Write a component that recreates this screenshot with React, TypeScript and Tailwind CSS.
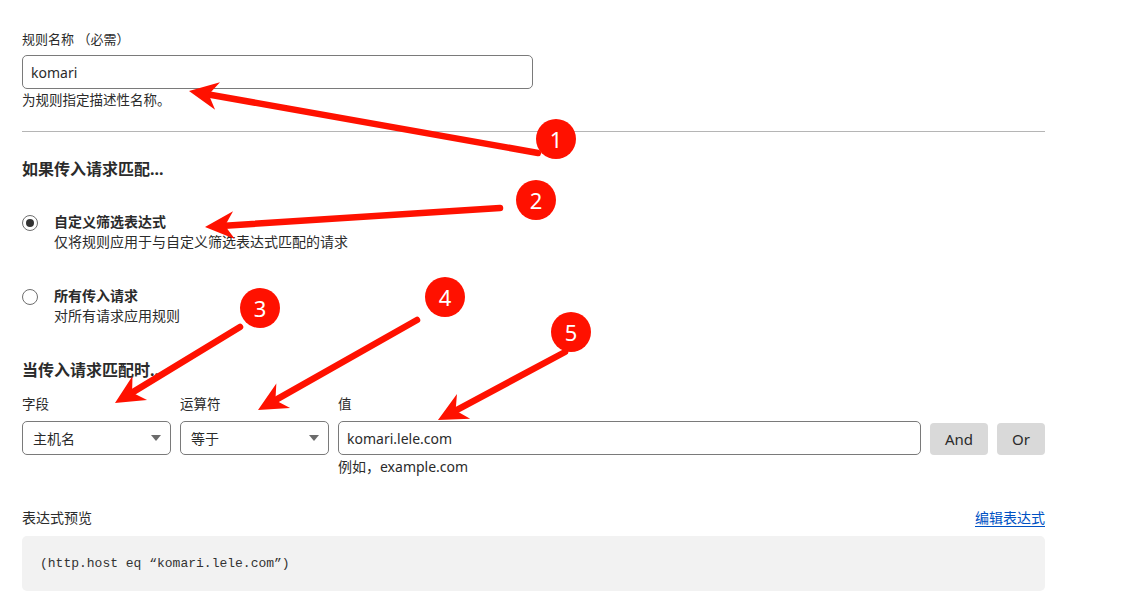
import React from "react";

const RED = "#ff1100";

type Pt = { x1: number; y1: number; x2: number; y2: number };

// annotation arrows: tail (x1,y1) -> tip (x2,y2)
const arrows: Pt[] = [
  { x1: 538, y1: 153, x2: 189, y2: 91 },
  { x1: 500, y1: 208, x2: 205, y2: 227 },
  { x1: 240, y1: 327, x2: 115, y2: 403 },
  { x1: 417, y1: 320, x2: 258, y2: 410 },
  { x1: 565, y1: 352, x2: 438, y2: 420 },
];

const badges = [
  { n: 1, x: 556, y: 139 },
  { n: 2, x: 536, y: 200 },
  { n: 3, x: 260, y: 308 },
  { n: 4, x: 445, y: 297 },
  { n: 5, x: 571, y: 332 },
];

function Arrow({ x1, y1, x2, y2 }: Pt) {
  const dx = x2 - x1;
  const dy = y2 - y1;
  const len = Math.hypot(dx, dy);
  const ux = dx / len;
  const uy = dy / len;
  const px = -uy;
  const py = ux;
  const L = 29;
  const W = 14;
  const N = 20;
  const bx = x2 - ux * L;
  const by = y2 - uy * L;
  const nx = x2 - ux * N;
  const ny = y2 - uy * N;
  const points = `${x2},${y2} ${bx + px * W},${by + py * W} ${nx},${ny} ${bx - px * W},${by - py * W}`;
  return (
    <g>
      <line x1={x1} y1={y1} x2={nx} y2={ny} stroke={RED} strokeWidth={6.5} strokeLinecap="round" />
      <polygon points={points} fill={RED} />
    </g>
  );
}

function Caret() {
  return (
    <svg width="10" height="6" viewBox="0 0 10 6">
      <path d="M0 0 L10 0 L5 6 Z" fill="#6b6b6b" />
    </svg>
  );
}

function Select({ value }: { value: string }) {
  return (
    <div className="mt-[8px] w-[149px] h-[34px] border border-[#7a7a7a] rounded-[5px] pl-[10px] pr-[9px] flex items-center justify-between text-[14px]">
      <span>{value}</span>
      <Caret />
    </div>
  );
}

function Radio({ checked, title, desc }: { checked?: boolean; title: string; desc: string }) {
  return (
    <div className="flex items-start gap-[16px]">
      <div className="mt-[3px] w-[16px] h-[16px] rounded-full border-[1.5px] border-[#6e6e6e] flex items-center justify-center">
        {checked && <div className="w-[8px] h-[8px] rounded-full bg-[#333]" />}
      </div>
      <div>
        <div className="text-[14px] leading-[20px] font-bold">{title}</div>
        <div className="text-[14px] leading-[20px]">{desc}</div>
      </div>
    </div>
  );
}

export default function App() {
  return (
    <div className="relative w-[1123px] h-[607px] overflow-hidden bg-white text-[#2b2b2b] font-['Noto_Sans','Noto_Sans_CJK_SC',sans-serif]">
      <div className="w-[1023px] ml-[22px] pt-[30px]">
        {/* rule name */}
        <div className="text-[13px] leading-[18px] [text-spacing-trim:space-all]">规则名称 （必需）</div>
        <div className="mt-[7px] w-[511px] h-[34px] border border-[#7a7a7a] rounded-[5px] px-[8px] flex items-center text-[14px]">
          komari
        </div>
        <div className="mt-[2px] text-[13.5px] leading-[18px]">为规则指定描述性名称。</div>

        <div className="mt-[22px] border-t border-[#b5b5b5]" />

        {/* match mode */}
        <div className="mt-[26px] text-[16px] leading-[22px] font-bold">如果传入请求匹配...</div>
        <div className="mt-[32px]">
          <Radio checked title="自定义筛选表达式" desc="仅将规则应用于与自定义筛选表达式匹配的请求" />
        </div>
        <div className="mt-[34px]">
          <Radio title="所有传入请求" desc="对所有请求应用规则" />
        </div>

        {/* expression builder */}
        <div className="mt-[33px] text-[16px] leading-[22px] font-bold">当传入请求匹配时...</div>
        <div className="mt-[14px] flex items-start gap-[9px]">
          <div>
            <div className="text-[13.5px] leading-[18px]">字段</div>
            <Select value="主机名" />
          </div>
          <div>
            <div className="text-[13.5px] leading-[18px]">运算符</div>
            <Select value="等于" />
          </div>
          <div>
            <div className="text-[13.5px] leading-[18px]">值</div>
            <div className="mt-[8px] w-[583px] h-[34px] border border-[#7a7a7a] rounded-[5px] px-[8px] flex items-center text-[14px]">
              komari.lele.com
            </div>
            <div className="mt-[3px] text-[14px] leading-[18px]">例如，example.com</div>
          </div>
          <button className="mt-[28px] w-[58px] h-[32px] rounded-[4px] bg-[#d9d9d9] text-[15px] text-[#2b2b2b]">And</button>
          <button className="mt-[28px] w-[48px] h-[32px] rounded-[4px] bg-[#d9d9d9] text-[15px] text-[#2b2b2b]">Or</button>
        </div>

        {/* preview */}
        <div className="mt-[32px] flex items-center justify-between text-[14px] leading-[20px]">
          <span>表达式预览</span>
          <a className="text-[#0051c3] underline underline-offset-[3px]">编辑表达式</a>
        </div>
        <div className="mt-[8px] h-[55px] rounded-[5px] bg-[#f2f2f2] px-[18px] flex items-center font-['Liberation_Mono',monospace] text-[13px] text-[#333]">
          (http.host eq “komari.lele.com”)
        </div>
      </div>

      {/* annotations */}
      <svg className="absolute inset-0 pointer-events-none" width="1123" height="607">
        {arrows.map((a, i) => (
          <Arrow key={i} {...a} />
        ))}
      </svg>
      {badges.map((b) => (
        <div
          key={b.n}
          className="absolute w-[40px] h-[40px] -ml-[20px] -mt-[20px] rounded-full bg-[#ff1100] text-white text-[22px] flex items-center justify-center font-['Noto_Sans',sans-serif]"
          style={{ left: b.x, top: b.y }}
        >
          {b.n}
        </div>
      ))}
    </div>
  );
}
